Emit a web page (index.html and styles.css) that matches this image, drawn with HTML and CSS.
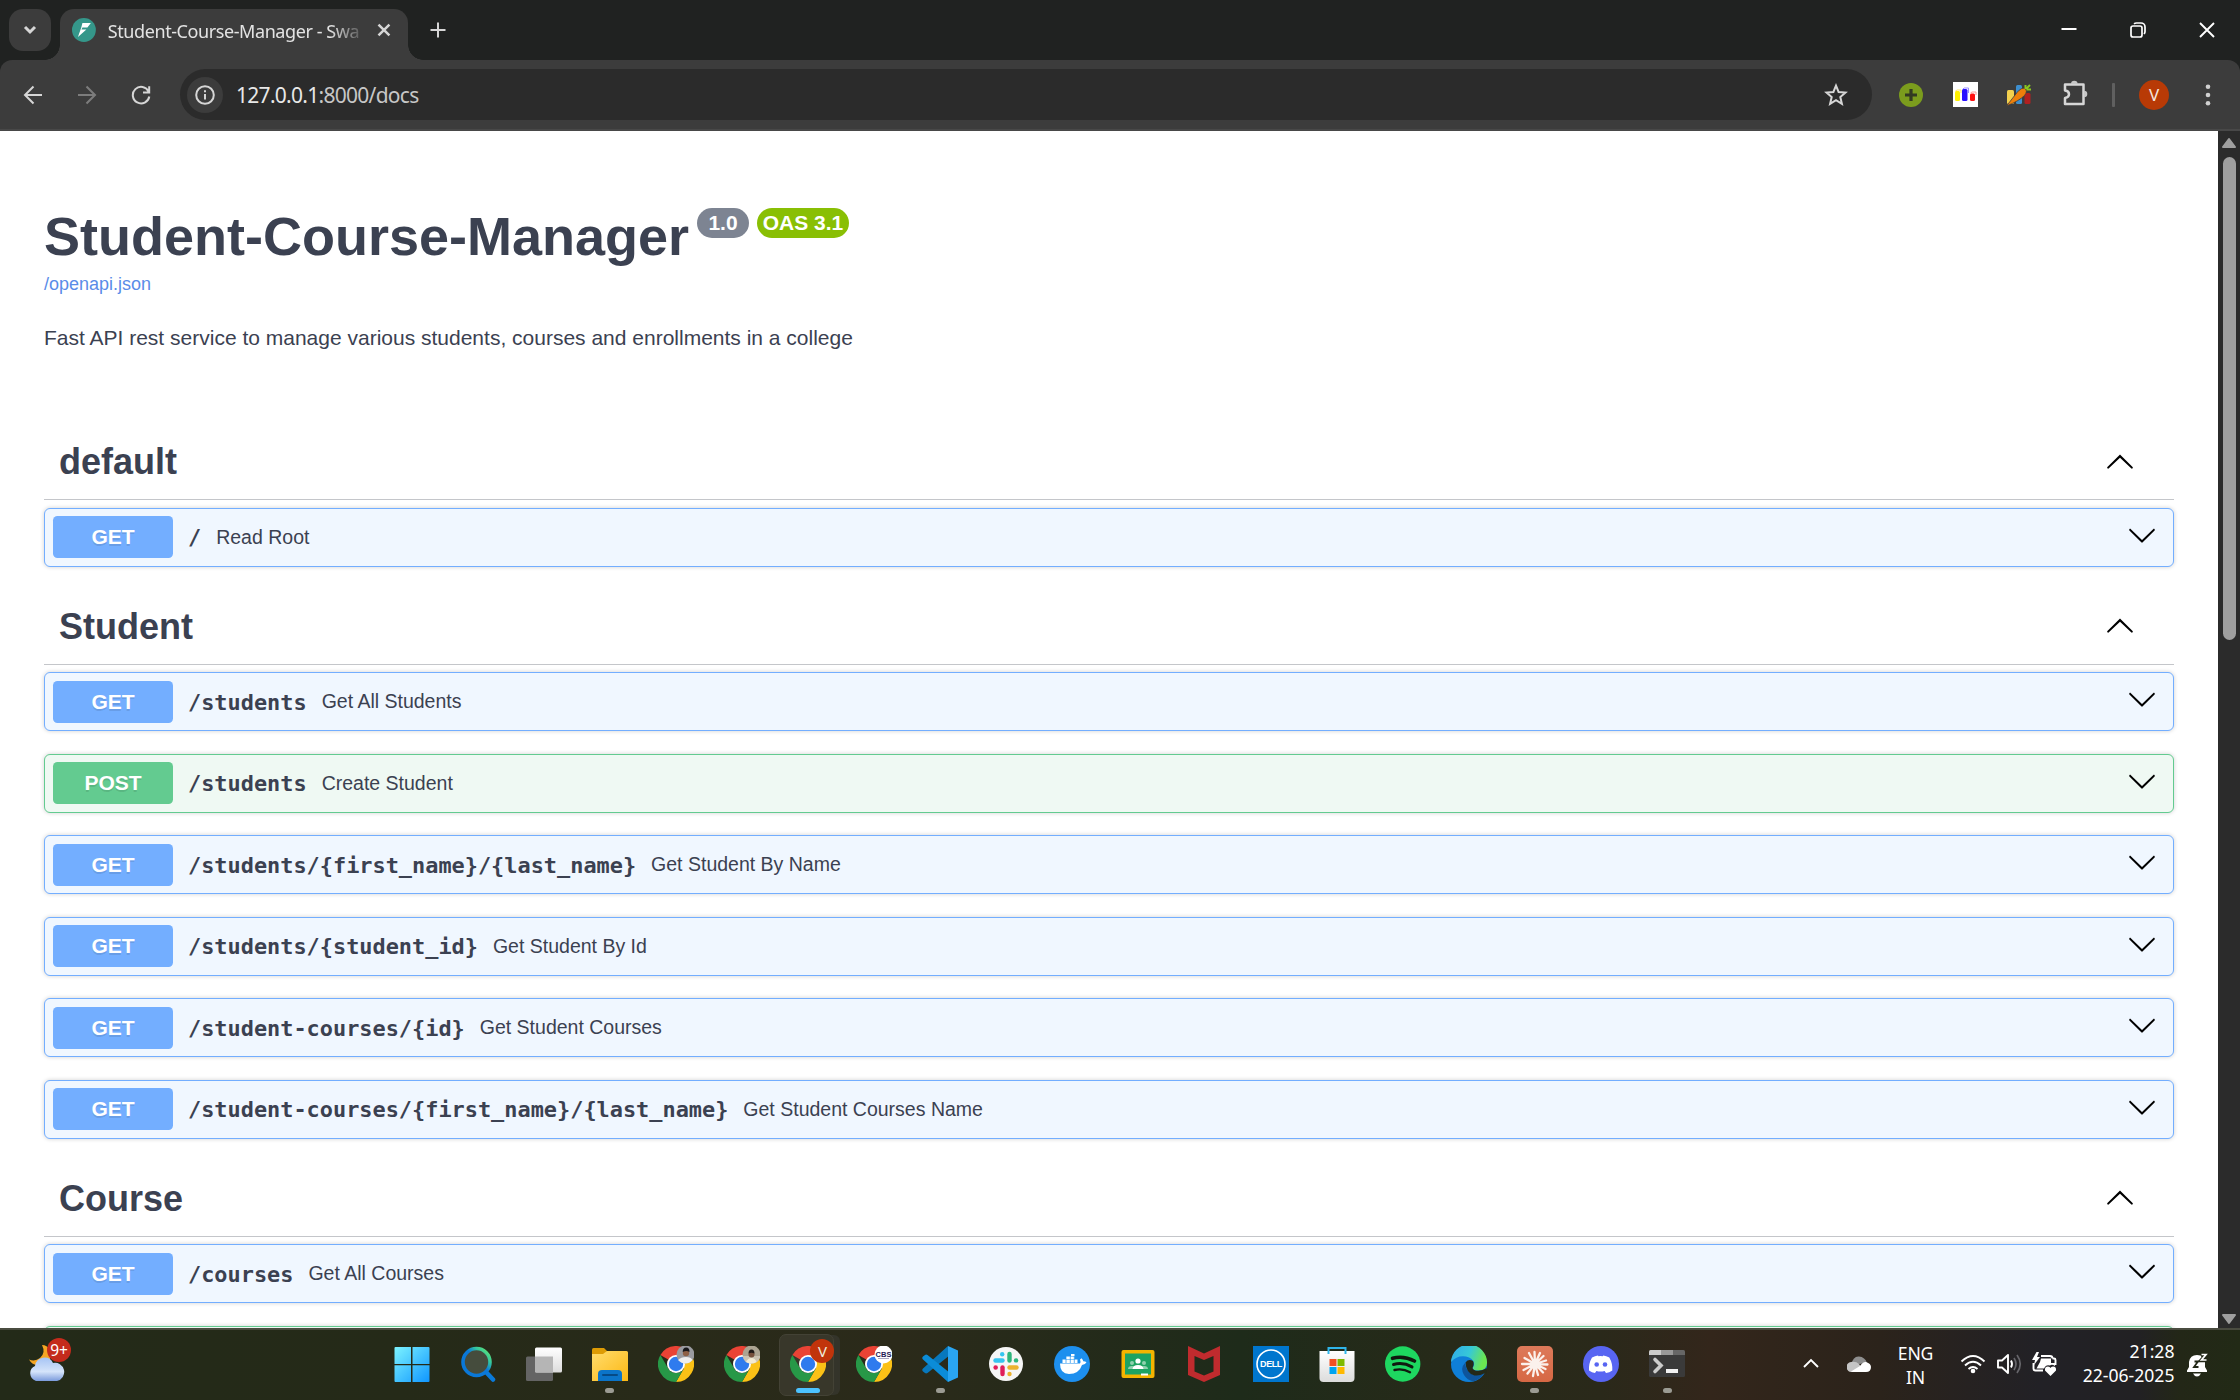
FILE: index.html
```html
<!DOCTYPE html>
<html lang="en">
<head>
<meta charset="utf-8">
<title>Student-Course-Manager - Swagger UI</title>
<link rel="stylesheet" href="styles.css">
</head>
<body>
<svg class="defs" width="0" height="0">
  <defs>
    <symbol id="up" viewBox="0 0 20 20"><path d="M17.418 14.908c.272.268.709.268.979 0s.271-.701 0-.969l-7.908-7.83c-.27-.268-.707-.268-.979 0l-7.908 7.83c-.27.268-.27.701 0 .969.271.268.709.268.979 0L10 7.767z"/></symbol>
    <symbol id="down" viewBox="0 0 20 20"><path d="M17.418 6.109c.272-.268.709-.268.979 0s.271.702 0 .97l-7.908 7.829c-.27.268-.707.268-.979 0L1.602 7.079c-.27-.268-.27-.702 0-.97.271-.268.709-.268.979 0L10 13.25z"/></symbol>
    <symbol id="chrome" viewBox="0 0 36 36">
      <path d="M18 18 2.4 9A18 18 0 0 1 33.6 9z" fill="#ea4335"/>
      <path d="M18 9H33.6A18 18 0 0 1 18 36L25.8 22.5z" fill="#fbc116"/>
      <path d="M2.4 9 10.2 22.5A9 9 0 0 0 25.8 22.5L18 36A18 18 0 0 1 2.4 9z" fill="#279847"/>
      <path d="M18 9H33.6L25 20z" fill="#fbc116"/>
      <circle cx="18" cy="18" r="9" fill="#fff"/><circle cx="18" cy="18" r="7.2" fill="#2f7bee"/>
    </symbol>
    <linearGradient id="win" x1="0" y1="0" x2="1" y2="1"><stop offset="0" stop-color="#7cf3ff"/><stop offset="1" stop-color="#0f96ff"/></linearGradient>
    <linearGradient id="lens" x1="0" y1="1" x2="1" y2="0"><stop offset=".55" stop-color="#0a78d8"/><stop offset=".75" stop-color="#34c7a0"/><stop offset="1" stop-color="#6bea65"/></linearGradient>
    <linearGradient id="light" x1="0" y1="0" x2="0" y2="1"><stop offset="0" stop-color="#fff"/><stop offset="1" stop-color="#dcdcdc"/></linearGradient>
    <linearGradient id="folder" x1="0" y1="0" x2="1" y2="1"><stop offset="0" stop-color="#ffdc6d"/><stop offset="1" stop-color="#fdb813"/></linearGradient>
    <linearGradient id="edgeTop" x1="0" y1="0" x2="1" y2=".3"><stop offset="0" stop-color="#2fa8ea"/><stop offset=".55" stop-color="#36c8d8"/><stop offset="1" stop-color="#6be651"/></linearGradient>
    <linearGradient id="claude" x1="0" y1="0" x2="0" y2="1"><stop offset="0" stop-color="#dd7a5a"/><stop offset="1" stop-color="#d66844"/></linearGradient>
    <linearGradient id="cloud" x1="0" y1="0" x2="0" y2="1"><stop offset="0" stop-color="#a6c4f4"/><stop offset=".6" stop-color="#d5e4fa"/><stop offset="1" stop-color="#7b9bdc"/></linearGradient>
  </defs>
</svg>

<header class="tabstrip">
  <button class="tab-search"><svg width="14" height="10" viewBox="0 0 14 10"><path d="M2 2l5 5 5-5" class="stroke w3"/></svg></button>
  <div class="tab">
    <svg width="24" height="24" viewBox="0 0 24 24"><circle cx="12" cy="12" r="12" fill="#35978a"/><path d="M10.500 5h8.500l-3.500 4.600h-5l-1 2h5L6 19l3.500-10z" fill="#fff"/></svg>
    <span class="tab-title">Student-Course-Manager - Swa</span>
    <svg width="14" height="14" viewBox="0 0 14 14"><path d="M1.500 1.500l11 11M12.500 1.500l-11 11" class="stroke w25"/></svg>
  </div>
  <svg class="new-tab" width="16" height="16" viewBox="0 0 16 16"><path d="M8 .5v15M.5 8h15" class="stroke w2"/></svg>
  <div class="win-buttons">
    <svg width="16" height="16" viewBox="0 0 16 16"><path d="M.5 7h15" stroke="#fff" stroke-width="2"/></svg>
    <svg width="16" height="16" viewBox="0 0 16 16" fill="none" stroke="#fff" stroke-width="1.700"><rect x="1" y="4" width="11" height="11" rx="2"/><path d="M4 1.800Q5 1 6.500 1H11a4 4 0 0 1 4 4v4.500Q15 11 14 12"/></svg>
    <svg width="16" height="16" viewBox="0 0 16 16"><path d="M1 1l14 14M15 1 1 15" stroke="#fff" stroke-width="1.900"/></svg>
  </div>
</header>

<nav class="toolbar">
  <span class="cell"><svg width="20" height="20" viewBox="0 0 20 20"><path d="M19 10H2.500M10.500 1.500 2 10l8.500 8.500" class="stroke w2"/></svg></span>
  <span class="cell dim"><svg width="20" height="20" viewBox="0 0 20 20"><path d="M1 10h16.500M9.500 1.500 18 10l-8.500 8.500" class="stroke w2"/></svg></span>
  <span class="cell"><svg width="20" height="20" viewBox="0 0 20 20"><path d="M17.600 6.500A8.300 8.300 0 1 0 18.300 11.500M18.200 1.300V7.500H12" class="stroke w2"/></svg></span>
  <div class="omnibox">
    <span class="site-info"><svg width="20" height="20" viewBox="0 0 20 20"><circle cx="10" cy="10" r="8.800" class="stroke w2"/><path d="M10 9v5.500M10 5.300v2" class="stroke w2"/></svg></span>
    <span class="url">127.0.0.1<span class="url-rest">:8000/docs</span></span>
    <svg class="star" width="24" height="24" viewBox="0 0 24 24"><path d="M12 2.700l2.600 6.300 6.900.6-5.200 4.500 1.600 6.700L12 17.200l-5.900 3.600 1.600-6.700L2.500 9.600 9.400 9z" class="stroke w2"/></svg>
  </div>
  <span class="cell"><svg width="24" height="24" viewBox="0 0 24 24"><circle cx="12" cy="12" r="12" fill="#7b9c1d"/><path d="M12 6v12M6 12h12" stroke="#333a22" stroke-width="3.200"/></svg></span>
  <span class="cell"><svg width="25" height="25" viewBox="0 0 25 25"><path fill="#fff" d="M0 0h25v25H0z"/><rect x="2" y="9" width="5" height="10" rx="1.500" fill="#fff000"/><path d="M2 9.500 4 8h4v3" stroke="#ffe96a" fill="none"/><rect x="9" y="7" width="5.500" height="12" rx="1.500" fill="#2a10ff"/><path d="M9.500 7.500 11 6h4.500v5" stroke="#9a90ff" fill="none"/><rect x="17" y="11.500" width="5" height="7.500" rx="1.500" fill="#f11"/><path d="M17.500 11 19 10h4v3" stroke="#f99" fill="none"/></svg></span>
  <span class="cell"><svg width="26" height="22" viewBox="0 0 26 22"><rect x="1" y="6" width="7" height="14" rx="1.500" fill="#f3d04e"/><rect x="10" y="1" width="6" height="19" rx="1.500" fill="#3d8fd0"/><rect x="18.500" y="9" width="6" height="11" rx="1.500" fill="#b02020"/><path d="M.5 22 11 8.500Q15.500 3 19 4.500q3 2.500-.5 7Q13 17 .5 22z" fill="#ee7f0a" stroke="#3c3c3c" stroke-width=".8"/><path d="M19.500 5V1M20 5l4-4M20.500 5.500H25" stroke="#8bc81e" stroke-width="2"/></svg></span>
  <span class="cell"><svg class="puzzle" width="26" height="26" viewBox="0 0 26 26"><path d="M3 4.500h18.500V24H3v-6q4-.6 4-3.700T3 10.600z" class="stroke w25" stroke-linejoin="round"/><path d="M9 4a3.300 3.300 0 0 1 6.600 0zM22 10.700a3.300 3.300 0 0 1 0 6.600z" fill="#c7c7c7"/></svg></span>
  <span class="divider"></span>
  <span class="cell"><span class="avatar">V</span></span>
  <span class="cell"><svg width="6" height="22" viewBox="0 0 6 22" fill="#d0d0d0"><circle cx="3" cy="2.700" r="2.300"/><circle cx="3" cy="11" r="2.300"/><circle cx="3" cy="19.300" r="2.300"/></svg></span>
</nav>

<main class="viewport">
  <div class="docs">
    <div class="title-row"><h1>Student-Course-Manager</h1><span class="badge version">1.0</span><span class="badge oas">OAS 3.1</span></div>
    <a class="spec-link">/openapi.json</a>
    <p class="about">Fast API rest service to manage various students, courses and enrollments in a college</p>

    <section class="tag">
      <h3>default<svg class="arrow"><use href="#up"/></svg></h3>
      <div class="op get"><span class="method">GET</span><span class="path">/</span><span class="summary">Read Root</span><svg class="arrow"><use href="#down"/></svg></div>
    </section>
    <section class="tag">
      <h3>Student<svg class="arrow"><use href="#up"/></svg></h3>
      <div class="op get"><span class="method">GET</span><span class="path">/students</span><span class="summary">Get All Students</span><svg class="arrow"><use href="#down"/></svg></div>
      <div class="op post"><span class="method">POST</span><span class="path">/students</span><span class="summary">Create Student</span><svg class="arrow"><use href="#down"/></svg></div>
      <div class="op get"><span class="method">GET</span><span class="path">/students/{first_name}/{last_name}</span><span class="summary">Get Student By Name</span><svg class="arrow"><use href="#down"/></svg></div>
      <div class="op get"><span class="method">GET</span><span class="path">/students/{student_id}</span><span class="summary">Get Student By Id</span><svg class="arrow"><use href="#down"/></svg></div>
      <div class="op get"><span class="method">GET</span><span class="path">/student-courses/{id}</span><span class="summary">Get Student Courses</span><svg class="arrow"><use href="#down"/></svg></div>
      <div class="op get"><span class="method">GET</span><span class="path">/student-courses/{first_name}/{last_name}</span><span class="summary">Get Student Courses Name</span><svg class="arrow"><use href="#down"/></svg></div>
    </section>
    <section class="tag">
      <h3>Course<svg class="arrow"><use href="#up"/></svg></h3>
      <div class="op get"><span class="method">GET</span><span class="path">/courses</span><span class="summary">Get All Courses</span><svg class="arrow"><use href="#down"/></svg></div>
      <div class="op post"></div>
    </section>
  </div>
  <div class="scrollbar">
    <svg width="16" height="12" viewBox="0 0 16 12"><path d="M8 2 14 10H2z" class="sb"/></svg>
    <span class="thumb"></span>
    <svg width="16" height="12" viewBox="0 0 16 12"><path d="M8 10 2 2h12z" class="sb"/></svg>
  </div>
</main>

<footer class="taskbar">
  <div class="weather">
    <svg width="37" height="38" viewBox="0 0 37 38"><path d="M14 1q4 8-2 13-5 4-11 1.500Q4 21 10 21l12-6V6Q19 1 14 1z" fill="#f5a623"/><path d="M8 37a8 8 0 0 1-1-15 9.500 9.500 0 0 1 18-3 9 9 0 0 1 4 18z" fill="url(#cloud)"/></svg>
    <span class="count">9+</span>
  </div>
  <div class="apps">
    <span class="app"><svg viewBox="0 0 36 36"><path d="M.5 2q0-1 1-1H17v17H.5zM18.500 1H34.500q1 0 1 1v16h-17zM.5 19.300H17V36H1.500q-1 0-1-1zM18.500 19.300h17V35q0 1-1 1h-16z" fill="url(#win)"/></svg></span>
    <span class="app"><svg viewBox="0 0 36 36"><path d="M26 26l7 7.500" stroke="#0a7ad9" stroke-width="4.500" stroke-linecap="round"/><circle cx="16.500" cy="16" r="13.500" fill="#454c3d" stroke="url(#lens)" stroke-width="3.600"/></svg></span>
    <span class="app"><svg viewBox="0 0 36 36"><rect y="10.500" width="27" height="24.500" rx="1.500" fill="#646464"/><rect x="9" y="1.500" width="27" height="25" rx="1.500" fill="url(#light)"/><path d="M9 10.500h18v16H10.500q-1.500 0-1.500-1.500z" fill="#b5b5b5"/></svg></span>
    <span class="app open"><svg viewBox="0 0 36 36"><path d="M0 3.500Q0 2 1.500 2H12l3.500 3.500L12 9H0z" fill="#dd9b05"/><path d="M0 8h11l4-3h19.500Q36 5 36 6.500V35H0z" fill="url(#folder)"/><path d="M6 35v-7q0-4 4-4h16q4 0 4 4v7z" fill="#0b74c9"/><path d="M11 29h14" stroke="#064a86" stroke-width="2" stroke-linecap="round"/></svg></span>
    <span class="app"><svg viewBox="0 0 36 36"><use href="#chrome"/><circle cx="27.500" cy="8.500" r="9" fill="#9a9ba0"/><path d="M20 14q3-3 8-3t6.500 3q-3 3.500-7 3.500T20 14z" fill="#eee"/><circle cx="28" cy="7" r="3.200" fill="#8d6046"/><path d="M24.700 6q0-4.500 3.500-4.500T31.500 6q-3-2-6.800 0z" fill="#17171a"/></svg></span>
    <span class="app"><svg viewBox="0 0 36 36"><use href="#chrome"/><circle cx="27.500" cy="8.500" r="9" fill="#aca492"/><path d="M18.700 10h17.600q-1 7.500-8.800 7.500T18.700 10z" fill="#cbc3b2"/><path d="M22 16q2-4 5.500-4t5 4q-5 3-10.500 0z" fill="#f3ead2"/><circle cx="27.500" cy="8.500" r="3" fill="#76503c"/><path d="M24.500 7.500q0-4 3-4t3 4q-3-1.500-6 0z" fill="#201b19"/></svg></span>
    <span class="app active"><svg viewBox="0 0 36 36"><use href="#chrome"/></svg><span class="profile">V</span></span>
    <span class="app"><svg viewBox="0 0 36 36"><use href="#chrome"/><circle cx="27.500" cy="8.500" r="9" fill="#fff"/><text x="27.500" y="10.500" class="cbs">CBS</text><path d="M22 12.500h11" stroke="#a9a7c0"/></svg></span>
    <span class="app open"><svg viewBox="0 0 36 36"><path d="M26 0 1 22.500q-1.500 1.500 0 3L3 27q1 .8 2.500 0L28 9z" fill="#0878bd"/><path d="M26 36 1 13.500q-1.500-1.500 0-3L3 9q1-.8 2.500 0L28 27z" fill="#0b8cd8"/><path d="M26 0 36 4.500v27L26 36z" fill="#2aa5f2"/></svg></span>
    <span class="app"><svg viewBox="0 0 36 36"><circle cx="18" cy="18" r="17" fill="#f6f6f6"/><g stroke-width="4.400" stroke-linecap="round"><path d="M7.500 14.500h7" stroke="#36c5f0"/><path d="M21.500 8v6.500" stroke="#2eb67d"/><path d="M28.500 21.500h-7" stroke="#ecb22e"/><path d="M14.500 28v-6.500" stroke="#e01e5a"/><path d="M14.200 8.200v.1" stroke="#36c5f0"/><path d="M28 14.400h.1" stroke="#2eb67d"/><path d="M21.500 28v.1" stroke="#ecb22e"/><path d="M7.600 21.500h.1" stroke="#e01e5a"/></g></svg></span>
    <span class="app"><svg viewBox="0 0 36 36"><circle cx="18" cy="18" r="18" fill="#1d8fee"/><path d="M6 17.500h20q1-1.500 0-4l1.500-1.300q1.500 1.300 1.800 3 2 0 3.200 1Q31 19 28 19q-3 9-13 9-9 0-9-10.500z" fill="#fff"/><path d="M8.500 13.500h15v3.500h-15zM12 10.500h8.500v2.500H12zM17 8h3.500v2H17z" fill="#fff"/><path d="M12 8v9M16.300 8v9M20.300 10v7" stroke="#1d8fee" stroke-width=".7"/></svg></span>
    <span class="app"><svg viewBox="0 0 36 36"><rect x="1.500" y="4" width="33" height="28" rx="2" fill="#f4b400"/><path d="M5 7.500h26v21H5z" fill="#1da362"/><g fill="#8fd1ae"><circle cx="12" cy="17" r="2"/><circle cx="24" cy="17" r="2"/><path d="M8 23q0-3 4-3t4 3zM20 23q0-3 4-3t4 3z"/></g><circle cx="18" cy="15" r="2.600" fill="#fff"/><path d="M12.500 23q.5-4 5.500-4t5.500 4z" fill="#fff"/><path d="M21 27.500h7v2h-7z" fill="#fff"/></svg></span>
    <span class="app"><svg viewBox="0 0 36 36"><path d="M2 0 18 7.500 34 0v29L18 36 2 29zM8.500 10v15.500l9.500 4 9.500-4V10L18 14z" fill="#c02b2e" fill-rule="evenodd"/></svg></span>
    <span class="app"><svg viewBox="0 0 36 36"><path fill="#0076ce" d="M0 0h36v36H0z"/><circle cx="18" cy="18" r="14" fill="none" stroke="#fff" stroke-width="1.600"/><text x="18" y="21.300" class="dell">DELL</text></svg></span>
    <span class="app"><svg viewBox="0 0 36 36"><path d="M.5 5h35v27q0 4-4 4h-27q-4 0-4-4z" fill="url(#light)"/><path d="M9.500 8V2h17v6" fill="none" stroke="#2fb5ea" stroke-width="2"/><path d="M10.500 13h7v7h-7z" fill="#f25022"/><path d="M18.500 13h7v7h-7z" fill="#7fba00"/><path d="M10.500 21h7v7h-7z" fill="#00a4ef"/><path d="M18.500 21h7v7h-7z" fill="#ffb900"/></svg></span>
    <span class="app"><svg viewBox="0 0 36 36"><circle cx="17.700" cy="18" r="17.700" fill="#1ed760"/><g fill="none" stroke="#10190f" stroke-linecap="round"><path d="M7.500 12.300q11-3 22 2.700" stroke-width="3.600"/><path d="M8.500 18.500q9.500-2.600 18.500 2.400" stroke-width="3"/><path d="M9.500 24q8-2 15.500 2.200" stroke-width="2.400"/></g></svg></span>
    <span class="app"><svg viewBox="0 0 36 36"><circle cx="18" cy="18" r="18" fill="#0f7fd8"/><path d="M0 16A18 18 0 0 1 36 17q0 7.500-9 7.500-5 0-5.500-2.500 2-2 1.500-5-1-5-8-6.500Q6 9 0 16z" fill="url(#edgeTop)"/><path d="M14 17q-5 5-1 12 3 5 9.500 6.500Q30 33 33 27q-4 2.500-9.500 2-8-1.500-9.500-12z" fill="#0e559c"/><path d="M14.500 16.500q3-4 7.500-1.500 1.600 3-.5 7 1 3 6 2.800 4.500-.3 8-2.800l.5 5-3 .5q-4 2.600-9.500 2-8.500-2-9-13z" fill="#242918"/></svg></span>
    <span class="app open"><svg viewBox="0 0 36 36"><rect width="36" height="36" rx="5" fill="url(#claude)"/><g stroke="#fbf1ec" stroke-width="2.300" stroke-linecap="round"><path d="M18 18 17.500 6M18 18l5-11M18 18l8.500-8M18 18l11-3.500M18 18l12.500.5M18 18l10.500 5M18 18l8 8.500M18 18l3 11M18 18l-2 12M18 18l-7.500 9.500M18 18 6.500 24M18 18H5M18 18 7.500 12M18 18l-6-11"/></g></svg></span>
    <span class="app"><svg viewBox="0 0 36 36"><circle cx="18" cy="18" r="18" fill="#5865f2"/><path d="M15.500 10.200 15 9.500q-3 .4-6 2-3.500 6-3 13 3 2.200 6 2.500l1.400-2.100q4.100 1 8.200 0L23 27q3.500-.5 6.300-2.500.5-7-3-13-3-1.600-6-2l-.6.800q-2-.3-4.200-.1z" fill="#fff"/><circle cx="13.700" cy="18.500" r="2.300" fill="#5865f2"/><circle cx="22" cy="18.500" r="2.300" fill="#5865f2"/></svg></span>
    <span class="app open"><svg viewBox="0 0 36 36"><path d="M0 5.500Q0 4 1.500 4H12v5H0z" fill="#ccc"/><path d="M12 4h12v5H12z" fill="#999"/><path d="M24 4h10.500Q36 4 36 5.500V9H24z" fill="#666"/><path d="M0 9h36v20.500q0 1.500-1.500 1.500h-33Q0 31 0 29.500z" fill="#3a3a3a"/><path d="M6 13.500l6 6-6 6" fill="none" stroke="#ccc" stroke-width="3.600" stroke-linecap="round"/><path d="M17 23h12v4H17z" fill="#f2f2f2"/></svg></span>
  </div>
  <div class="tray">
    <svg class="t-up" width="18" height="12" viewBox="0 0 18 12"><path d="M2 10l7-7 7 7" class="stroke white"/></svg>
    <svg class="t-cloud" width="24" height="16" viewBox="0 0 24 16"><path d="M4 9Q6 0 12 .5T20 7z" fill="#8f8f8f"/><path d="M5 16a5 5 0 0 1-1-10q5-1 8 2l6 8z" fill="#c5c5c5"/><path d="M4 15.500 13 10q3-4.500 6-4 5 1.500 5 5 0 5-5 5H5z" fill="#fff"/></svg>
    <div class="lang">ENG<br>IN</div>
    <svg class="t-wifi" width="26" height="20" viewBox="0 0 26 20"><path d="M1.500 7.500q11.500-11 23 0M5 11.500q8-7.500 16 0M8.500 15q4.500-4 9 0" class="stroke white"/><circle cx="13" cy="17" r="2.300" fill="#fff"/></svg>
    <svg class="t-sound" width="26" height="22" viewBox="0 0 26 22"><path d="M2 7.500h4l6-5.500v18l-6-5.500H2z" class="stroke white" stroke-linejoin="round"/><path d="M15 7.500q2 3.500 0 7" class="stroke white"/><path d="M18 5q4 6 0 12M21 2q6.500 9 0 18" fill="none" stroke="#66656a" stroke-width="1.700"/></svg>
    <svg class="t-bat" width="26" height="24" viewBox="0 0 26 24"><path d="M9 4h9q2.500 0 2.500 2.500M1.500 11v5.500q0 2 2 2H11M20.500 6.500H22q1.500 0 1.500 1.500v5" class="stroke white"/><path d="M9 6.500h10v4.500l4 0v3q-3-2-5-.5-4-1.500-6 3H4.500L8 10z" fill="#fff"/><path d="M4.500 0 0 8h3L2 13l6-8H5L7 0zM18.500 24 13 18.500q-.5-4 3-4 2 0 2.500 1.500.5-1.500 2.500-1.500 3.500 0 3 4z" fill="#fff"/></svg>
    <div class="clock">21:28<br>22-06-2025</div>
    <svg class="t-bell" width="22" height="24" viewBox="0 0 22 24"><path d="M0 17.500 2 14V9q1-7 8-7 7.500 0 8 7v5l2 3.500V19H0zM6 20.500h8q-1.500 3-4 3t-4-3z" fill="#fff"/><path d="M7.500 8.500H11l-4 5.500h4.500" fill="none" stroke="#222716" stroke-width="1.800"/><path d="M14 2h5l-5 5.500h5" fill="none" stroke="#222716" stroke-width="3.600"/><path d="M14.500 1.500H19l-4.500 5.500h5" fill="none" stroke="#fff" stroke-width="1.700"/></svg>
  </div>
</footer>
</body>
</html>
```
FILE: styles.css
```css
* { box-sizing: border-box; }
body {
  margin: 0; width: 2240px; height: 1400px; overflow: hidden;
  display: flex; flex-direction: column;
  font-family: "Liberation Sans", Arial, sans-serif; background: #202221;
}
.defs { position: absolute; }
.stroke { fill: none; stroke: #d6d6d6; stroke-width: 2; }
.stroke.w25 { stroke-width: 2.5; }
.stroke.w3 { stroke-width: 3; }
.stroke.white { stroke: #fff; stroke-width: 1.9; }

/* Tab strip */
.tabstrip {
  height: 60px; flex: none; display: flex; align-items: flex-start;
  padding: 9px 18px 0 9px; background: #202221;
}
.tab-search {
  width: 42px; height: 42px; margin-right: 9px; padding: 0; border: 0; border-radius: 14px;
  background: #3c3c3c; display: flex; align-items: center; justify-content: center;
}
.tab {
  position: relative; width: 348px; height: 51px; padding: 0 17px 9px 12px;
  border-radius: 14px 14px 0 0; background: #3c3c3c;
  display: flex; align-items: center;
}
.tab::before, .tab::after {
  content: ""; position: absolute; bottom: 0; width: 15px; height: 15px;
}
.tab::before { left: -15px; background: radial-gradient(circle at 0 0, transparent 14.5px, #3c3c3c 15px); }
.tab::after { right: -15px; background: radial-gradient(circle at 100% 0, transparent 14.5px, #3c3c3c 15px); }
.tab-title {
  width: 254px; margin: 2px 17px 0 12px; white-space: nowrap;
  font: 18px/26px "Noto Sans", "Open Sans", sans-serif; letter-spacing: -.42px; color: #e3e3e3;
  -webkit-mask-image: linear-gradient(90deg, #000 222px, rgba(0, 0, 0, .15) 254px);
  mask-image: linear-gradient(90deg, #000 222px, rgba(0, 0, 0, .15) 254px);
}
.new-tab { margin: 13px 0 0 22px; }
.win-buttons { margin: 13px 7px 0 auto; display: flex; gap: 53px; }

/* Toolbar */
.toolbar {
  height: 71px; flex: none; display: flex; align-items: center; padding: 0 5px 0 6px;
  background: #3c3c3c; border-radius: 12px 12px 0 0; border-bottom: 2px solid #484848;
}
.cell { width: 54px; display: flex; align-items: center; justify-content: center; flex: none; }
.dim { opacity: .42; }
.omnibox {
  height: 51px; width: 1692px; margin: 0 12px; padding: 0 24px 0 7px; border-radius: 26px;
  background: #2b2b2b; display: flex; align-items: center;
}
.site-info { width: 36px; height: 36px; border-radius: 50%; background: #3c3c3c; display: flex; align-items: center; justify-content: center; }
.url { margin-left: 13px; font: 21px/30px "Noto Sans", "Open Sans", sans-serif; letter-spacing: -.72px; color: #e8e8e8; }
.url-rest { color: #c7c7c7; }
.star { margin-left: auto; }
.puzzle { margin-left: 4px; margin-top: -4px; }
.divider { width: 3px; height: 24px; margin: 0 12px; background: #606060; border-radius: 1px; }
.avatar {
  width: 30px; height: 30px; border-radius: 50%; background: #b83a06; color: #f5e6df;
  font: 17px/30px "Noto Sans", sans-serif; text-align: center;
}

/* API docs page */
.viewport { height: 1197px; flex: none; display: flex; background: #fff; overflow: hidden; }
.docs { width: 2218px; height: 1197px; overflow: hidden; padding: 78px 44px 0; color: #3b4151; }
.title-row { display: flex; align-items: flex-start; }
h1 { margin: 0 8px 0 0; font-size: 54px; line-height: 54px; }
.badge {
  height: 30px; margin-top: -1px; border-radius: 15px; color: #fff;
  font-size: 21px; font-weight: bold; line-height: 30px; text-align: center;
}
.version { width: 52px; margin-right: 8px; background: #7d8492; }
.oas { width: 92px; background: #89bf04; }
.spec-link { display: block; margin-top: 11px; font-size: 18px; line-height: 21px; color: #5a8ce8; }
.about { margin: 27.5px 0 81.1px; font-size: 21px; line-height: 30px; }
.tag { margin-bottom: 31.5px; }
.tag h3 {
  display: flex; align-items: center; justify-content: space-between;
  margin: 0 0 7.7px; padding: 1.5px 39px 10px 15px; border-bottom: 1px solid #c4c6ca;
  font-size: 36px; line-height: 54px;
}
.arrow { width: 30px; height: 30px; fill: #000; }
.tag h3 .arrow { margin-top: -3px; }
.op {
  height: 59px; margin-bottom: 22.45px; padding: 0 16px 0 8px; border: 1px solid; border-radius: 6px;
  display: flex; align-items: center; box-shadow: 0 0 4.5px rgba(0, 0, 0, .19);
}
.op:last-child { margin-bottom: 0; }
.op.get { border-color: #73aeff; background: #f0f7ff; }
.op.post { border-color: #63cb90; background: #eff9f3; }
.method {
  width: 120px; height: 42px; margin-right: 15px; border-radius: 4.5px; color: #fff;
  font-size: 21px; font-weight: bold; line-height: 42px; text-align: center;
  text-shadow: 0 1.5px 0 rgba(0, 0, 0, .1);
}
.get .method { background: #73aeff; }
.post .method { background: #63cb90; }
.path { font: bold 21.9px/30px "DejaVu Sans Mono", monospace; padding-top: 2px; }
.summary { margin: -1px 0 0 15px; font-size: 19.5px; line-height: 30px; }
.op .arrow { margin-left: auto; margin-top: -5px; }

.scrollbar { width: 22px; background: #2b2b2b; display: flex; flex-direction: column; align-items: center; padding: 6px 0 3px; }
.thumb { width: 13px; height: 483px; margin: 8px 0 auto; border-radius: 7px; background: #9f9f9f; }
.sb { fill: #9f9f9f; stroke: #9f9f9f; stroke-width: 2; stroke-linejoin: round; }

/* Taskbar */
.taskbar {
  height: 72px; flex: none; display: flex; border-top: 2px solid #4a4c40; color: #fff;
  background: linear-gradient(90deg, #232a18 0, #252a18 400px, #2b2a1a 900px, #1e2b1a 1240px, #272a19 1450px, #2a291a 1600px, #33261b 1710px, #2b231b 1880px, #222126 2040px, #222123 2140px, #232717 2180px, #222a16 2240px);
}
.weather { position: relative; width: 378px; padding: 14px 0 0 28px; }
.count {
  position: absolute; left: 47px; top: 8px; width: 24px; height: 24px; border-radius: 50%;
  background: #c42b1c; font: 15.5px/24px "Noto Sans", sans-serif; text-align: center;
}
.apps { display: flex; width: 1321.500px; }
.app { position: relative; flex: 1; height: 70px; display: flex; justify-content: center; padding: 16px 0 0 1px; }
.app svg { width: 36px; height: 36px; display: block; position: relative; }
.app.open::after, .app.active::after {
  content: ""; position: absolute; bottom: 7px; width: 9px; height: 5px; border-radius: 3px; background: #9b9b93;
}
.app.active::after { width: 24px; background: #4cc2ff; }
.app.active::before {
  content: ""; position: absolute; left: 5px; top: 4px; width: 53px; height: 60px; border-radius: 7px;
  background: #38372a; border: 1px solid #434235; box-shadow: 7px 0 0 -1px #34342a;
}
.profile {
  position: absolute; left: 36px; top: 9px; width: 24px; height: 24px; border-radius: 50%;
  background: #c1340b; color: #eed; font: 15px/24px "Noto Sans", sans-serif; text-align: center;
}
.cbs { font: bold 7.5px "Liberation Sans", sans-serif; fill: #241b55; text-anchor: middle; }
.dell { font: bold 9px "Liberation Sans", sans-serif; fill: #fff; text-anchor: middle; letter-spacing: -.4px; }
.tray { flex: 1; display: flex; align-items: flex-start; font: 17.6px/24px "Noto Sans", "Open Sans", sans-serif; letter-spacing: -.2px; }
.t-up { margin: 27px 0 0 102px; }
.t-cloud { margin: 26px 0 0 27px; }
.lang { width: 50px; margin: 11px 0 0 20px; text-align: center; }
.t-wifi { margin: 24px 0 0 19px; }
.t-sound { margin: 23px 0 0 10px; }
.t-bat { margin: 22px 0 0 10px; }
.clock { width: 104px; margin: 9px 14px 0 13px; text-align: right; white-space: nowrap; letter-spacing: 0; }
.t-bell { margin: 23px 0 0 -2px; }
```
